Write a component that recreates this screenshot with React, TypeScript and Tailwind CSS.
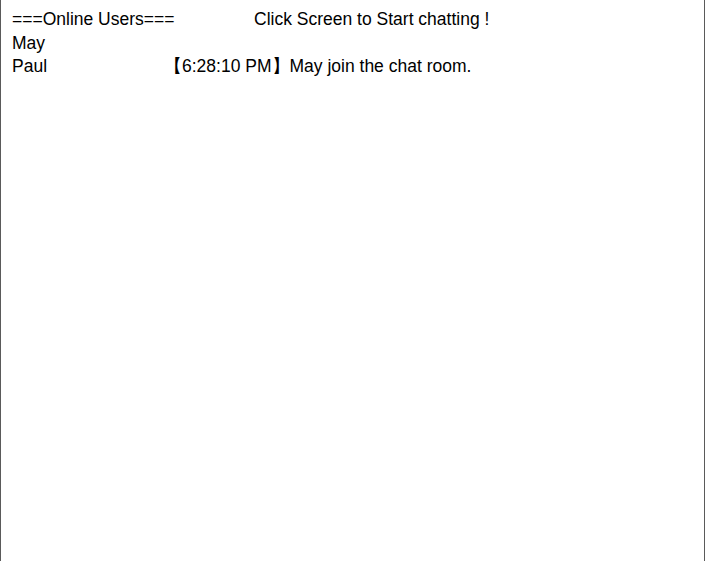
import React from 'react';

const users = ['May', 'Paul'];

const messages = [{ time: '6:28:10 PM', text: 'May join the chat room.' }];

export default function App() {
  return (
    <div
      className="h-[561px] w-[705px] bg-white border-l border-r border-[#5a5a5a] text-black text-[17.5px] leading-[23.5px] flex cursor-pointer"
      style={{ fontFamily: '"Liberation Sans", Arial, sans-serif' }}
    >
      {/* Online users */}
      <div className="w-[163px] pl-[11px] pt-[8px] shrink-0 whitespace-nowrap">
        <div>===Online Users===</div>
        {users.map((u) => (
          <div key={u}>{u}</div>
        ))}
      </div>

      {/* Chat area */}
      <div className="flex-1 pt-[8px] whitespace-nowrap">
        <div className="pl-[90px]">Click Screen to Start chatting !</div>
        <div className="mt-[23.5px]">
          {messages.map((m, i) => (
            <div key={i}>
              【{m.time}】{m.text}
            </div>
          ))}
        </div>
      </div>
    </div>
  );
}
